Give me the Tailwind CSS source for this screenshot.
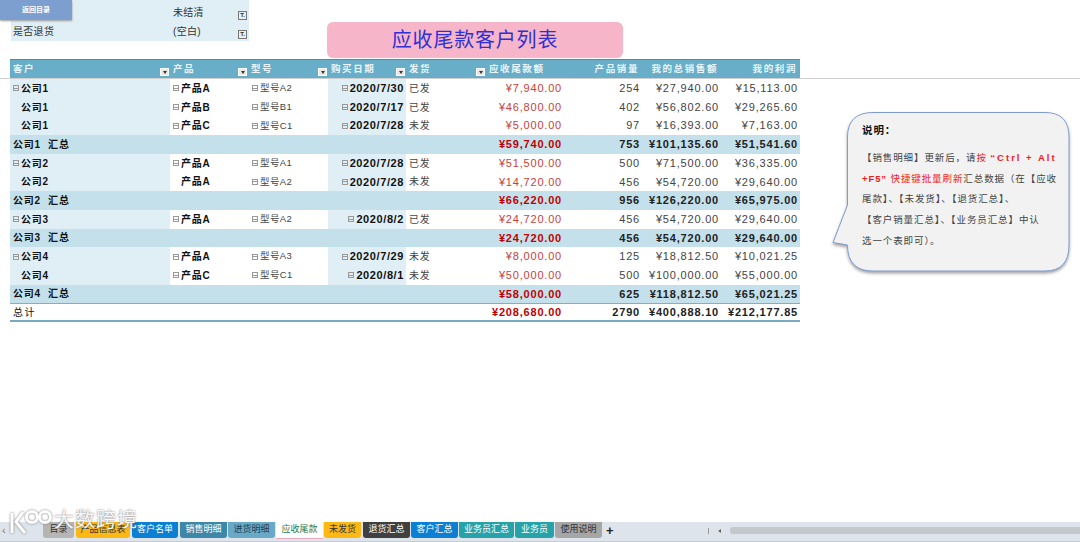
<!DOCTYPE html>
<html lang="zh-CN">
<head>
    <meta charset="UTF-8">
    <title>应收尾款客户列表</title>
    <script src="https://cdn.jsdelivr.net/npm/@tailwindcss/browser@4"></script>
</head>
<body class="relative w-[1080px] h-[542px] overflow-hidden bg-white flex flex-col font-['Liberation_Sans','Noto_Sans_CJK_SC',sans-serif] text-[#222]">

    <!-- slicer and title -->
    <div class="relative h-[59px] shrink-0 flex">
        <div class="ml-[11px] w-[238px] h-[41px] bg-[#e0eff5] grid grid-cols-[162px_76px] grid-rows-2 text-[10px] tracking-[.3px] text-[#333] whitespace-nowrap">
            <div></div>
            <div class="flex items-center justify-between pt-[4px] pr-[2px]"><span>未结清</span><span class="w-[9px] h-[9px] mt-[7px] bg-[#eee] border border-[#777] text-[6px] leading-[7px] tracking-normal font-bold text-center">T.</span></div>
            <div class="flex items-center pl-[2px] pt-[2px]">是否退货</div>
            <div class="flex items-center justify-between pt-[2px] pr-[2px]"><span>(空白)</span><span class="w-[9px] h-[9px] mt-[5px] bg-[#eee] border border-[#777] text-[6px] leading-[7px] tracking-normal font-bold text-center">T.</span></div>
        </div>
        <div class="absolute left-0 top-0 w-[72px] h-[20px] bg-[#7c9fcf] shadow-[0_1px_2px_#999] flex items-center justify-center text-[7px] font-bold text-white">返回目录</div>
        <div class="ml-[78px] mt-[22px] w-[296px] h-[36px] rounded-[6px] bg-[#f7b5c9] flex items-center justify-center text-[20px] tracking-[.8px] text-[#2f2fd6]">应收尾款客户列表</div>
    </div>

    <!-- pivot table -->
    <div id="pivot" class="shrink-0"></div>

    <div class="flex-1"></div>

    <!-- sheet tabs -->
    <div class="shrink-0 h-[20px] bg-[#dde4ec] border-b border-[#c5ccd4] flex items-start text-[9px] text-white">
        <div class="w-[43px] pl-[2px] pt-[1px] text-[#777] text-[11px] leading-[15px]">‹</div>
        <div class="w-[31px] h-[16px] mr-[2px] rounded-b-[3px] bg-[#b5b5b5] text-[#333] flex items-center justify-center">目录</div>
        <div class="w-[54px] h-[16px] mr-[2px] rounded-b-[3px] bg-[#fdb813] text-[#333] flex items-center justify-center">产品信息表</div>
        <div class="w-[46px] h-[16px] mr-[2px] rounded-b-[3px] bg-[#0b7fd4] flex items-center justify-center">客户名单</div>
        <div class="w-[47px] h-[16px] mr-[1px] rounded-b-[3px] bg-[#3f87a8] flex items-center justify-center">销售明细</div>
        <div class="w-[47px] h-[16px] mr-[1px] rounded-b-[3px] bg-[#69a9c8] text-[#1f3f50] flex items-center justify-center">进货明细</div>
        <div class="w-[47px] h-[17px] mr-[1px] bg-white border-b border-[#e8a9bd] text-[#1f7a4d] flex items-center justify-center">应收尾款</div>
        <div class="w-[37px] h-[16px] mr-[2px] rounded-b-[3px] bg-[#fdb813] text-[#333] flex items-center justify-center">未发货</div>
        <div class="w-[47px] h-[16px] mr-[1px] rounded-b-[3px] bg-[#404040] flex items-center justify-center">退货汇总</div>
        <div class="w-[47px] h-[16px] mr-[1px] rounded-b-[3px] bg-[#0b7fd4] flex items-center justify-center">客户汇总</div>
        <div class="w-[55px] h-[16px] mr-[1px] rounded-b-[3px] bg-[#27a2a8] flex items-center justify-center">业务员汇总</div>
        <div class="w-[39px] h-[16px] mr-[1px] rounded-b-[3px] bg-[#27a2a8] flex items-center justify-center">业务员</div>
        <div class="w-[47px] h-[16px] rounded-b-[3px] bg-[#a6a6a6] text-[#333] flex items-center justify-center">使用说明</div>
        <div class="ml-[4px] text-[13px] leading-[17px] font-bold text-[#222]">+</div>
        <div class="ml-[94px] mt-[6px] w-[1px] h-[6px] bg-[#999]"></div>
        <div class="ml-[9px] mt-[7px] w-0 h-0 border-y-[2.5px] border-y-transparent border-r-[3px] border-r-[#666]"></div>
        <div class="ml-[9px] mt-[5px] flex-1 h-[7px] rounded-l-[3px] bg-[#c3c8cd]"></div>
    </div>

    <!-- callout -->
    <svg class="absolute left-[828px] top-[108px]" width="252" height="172" viewBox="0 0 252 172">
        <defs><filter id="sh" x="-10%" y="-10%" width="120%" height="125%"><feDropShadow dx="0" dy="2" stdDeviation="1.5" flood-color="#555" flood-opacity=".55"/></filter></defs>
        <path d="M45 4.500H217Q241 4.500 241 29V137Q241 163 217 163H45Q19.500 163 19.500 137V137L5 134.500L19.500 97V29Q19.500 4.500 45 4.500Z" fill="#f2f2f2" stroke="#7f9bd0" stroke-width="1" filter="url(#sh)"/>
    </svg>
    <div class="absolute left-[862px] top-[122px] text-[9.500px] text-[#444] tracking-[.9px] leading-[20.700px] whitespace-nowrap">
        <div class="font-bold text-[10.500px] text-[#111] mb-[10px] leading-[16px]">说明：</div>
        <div>【销售明细】更新后，请<span class="text-[#f01c1c]">按 <span class="font-bold tracking-[2px]">“Ctrl + Alt</span></span></div>
        <div><span class="text-[#f01c1c]"><span class="font-bold">+F5”</span> 快捷键批量刷新</span>汇总数据（在【应收</div>
        <div>尾款】、【未发货】、【退货汇总】、</div>
        <div>【客户销量汇总】、【业务员汇总】中认</div>
        <div>选一个表即可）。</div>
    </div>

    <!-- watermark -->
    <svg class="absolute left-[8px] top-[507px]" width="46" height="30" viewBox="0 0 46 30" fill="none" stroke="#fff" stroke-width="3" style="filter:drop-shadow(0 0 1px #777)">
        <path d="M4 6V26M15 5L8 15L17 26"/><circle cx="24" cy="10" r="5.500"/><circle cx="37" cy="10" r="5.500"/>
    </svg>
    <div class="absolute left-[54px] top-[508px] text-[20px] leading-[24px] tracking-[1px] text-white/95 [text-shadow:0_0_2px_#666]">大数跨境</div>

    <script>
        var COLS = 'grid grid-cols-[160px_78px_80px_78px_80px_78px_78px_79px_79px]';
        var rows = [
            ['公司1', 1, '产品A', 1, '型号A2', '2020/7/30', '已发', '¥7,940.00', '254', '¥27,940.00', '¥15,113.00'],
            ['公司1', 0, '产品B', 1, '型号B1', '2020/7/17', '已发', '¥46,800.00', '402', '¥56,802.60', '¥29,265.60'],
            ['公司1', 0, '产品C', 1, '型号C1', '2020/7/28', '未发', '¥5,000.00', '97', '¥16,393.00', '¥7,163.00'],
            ['公司1 汇总', '¥59,740.00', '753', '¥101,135.60', '¥51,541.60'],
            ['公司2', 1, '产品A', 1, '型号A1', '2020/7/28', '已发', '¥51,500.00', '500', '¥71,500.00', '¥36,335.00'],
            ['公司2', 0, '产品A', 0, '型号A2', '2020/7/28', '未发', '¥14,720.00', '456', '¥54,720.00', '¥29,640.00'],
            ['公司2 汇总', '¥66,220.00', '956', '¥126,220.00', '¥65,975.00'],
            ['公司3', 1, '产品A', 1, '型号A2', '2020/8/2', '已发', '¥24,720.00', '456', '¥54,720.00', '¥29,640.00'],
            ['公司3 汇总', '¥24,720.00', '456', '¥54,720.00', '¥29,640.00'],
            ['公司4', 1, '产品A', 1, '型号A3', '2020/7/29', '未发', '¥8,000.00', '125', '¥18,812.50', '¥10,021.25'],
            ['公司4', 0, '产品C', 1, '型号C1', '2020/8/1', '未发', '¥50,000.00', '500', '¥100,000.00', '¥55,000.00'],
            ['公司4 汇总', '¥58,000.00', '625', '¥118,812.50', '¥65,021.25']
        ];

        var box = '<span class="inline-block w-[6px] h-[6px] mr-[2px] shrink-0 border border-[#999] bg-[linear-gradient(#999,#999)] bg-no-repeat bg-center bg-[length:4px_1px]"></span>';
        var drop = '<span class="absolute right-[1px] top-[8px] w-[9px] h-[8px] bg-[#e8e8e8] border border-white flex items-center justify-center"><span class="w-0 h-0 border-x-[2.500px] border-x-transparent border-t-[3px] border-t-[#333]"></span></span>';

        function head(label, right, filter) {
            return '<div class="relative flex items-center h-full px-[3px] ' + (right ? 'justify-end' : '') + '">' +
                '<span class="text-[9.500px] font-bold tracking-[1.600px] whitespace-nowrap text-[#eaf5f9]">' + label + '</span>' + (filter ? drop : '') + '</div>';
        }
        function money(v, cls) {
            return '<div class="flex items-center justify-end pr-[2px] text-[11px] tracking-[.8px] whitespace-nowrap ' + cls + '">' + v + '</div>';
        }

        var html = '<div class="border-b border-[#cfcfcf] h-[20px]"><div class="ml-[10px] w-[790px] h-[19px] border-t border-[#3f93ad] bg-[#68aec9] ' + COLS + '">' +
            head('客户', 0, 1) + head('产品', 0, 1) + head('型号', 0, 1) + head('购买日期', 0, 1) + head('发货', 0, 1) +
            head('应收尾款额', 0, 0) + head('产品销量', 1, 0) + head('我的总销售额', 1, 0) + head('我的利润', 1, 0) +
            '</div></div><div class="ml-[10px] w-[790px]">';

        rows.forEach(function (r) {
            if (r.length === 5) {
                html += '<div class="h-[18.700px] bg-[#c3e0eb] ' + COLS + '">' +
                    '<div class="col-span-5 flex items-center pl-[3px] text-[10px] font-bold tracking-[.8px] whitespace-pre text-[#111]">' + r[0].replace(' ', '  ') + '</div>' +
                    money(r[1], 'font-bold tracking-[.6px] text-[#c00000]') + money(r[2], 'font-bold tracking-[.6px]') + money(r[3], 'font-bold tracking-[.6px]') + money(r[4], 'font-bold tracking-[.6px]') + '</div>';
                return;
            }
            html += '<div class="h-[18.700px] ' + COLS + '">' +
                '<div class="bg-[#e0eff5] flex items-center ' + (r[1] ? 'pl-[3px]' : 'pl-[11px]') + ' text-[10px] font-bold tracking-[.8px] text-[#111]">' + (r[1] ? box : '') + r[0] + '</div>' +
                '<div class="flex items-center ' + (r[3] ? 'pl-[3px]' : 'pl-[11px]') + ' text-[10px] font-bold tracking-[.8px] text-[#111]">' + (r[3] ? box : '') + r[2] + '</div>' +
                '<div class="flex items-center pl-[4px] text-[9.500px] tracking-[.4px] text-[#444]">' + box + r[4] + '</div>' +
                '<div class="bg-[#e0eff5] flex items-center justify-end pr-[2px] text-[11px] font-bold tracking-[.6px] text-[#111]">' + box + r[5] + '</div>' +
                '<div class="flex items-center pl-[3px] text-[10px] tracking-[.8px] text-[#444]">' + r[6] + '</div>' +
                money(r[7], 'text-[#c8413a]') + money(r[8], 'text-[#444]') + money(r[9], 'text-[#444]') + money(r[10], 'text-[#444]') + '</div>';
        });

        html += '<div class="h-[19px] border-t border-[#7fb0c5] border-b-2 border-b-[#7aaabd] ' + COLS + '">' +
            '<div class="col-span-5 flex items-center pl-[3px] text-[10px] tracking-[1.400px] text-[#111]">总计</div>' +
            money('¥208,680.00', 'font-bold tracking-[.6px] text-[#c00000]') + money('2790', 'font-bold tracking-[.6px]') + money('¥400,888.10', 'font-bold tracking-[.6px]') + money('¥212,177.85', 'font-bold tracking-[.6px]') + '</div></div>';

        document.getElementById('pivot').innerHTML = html;
    </script>
</body>
</html>
